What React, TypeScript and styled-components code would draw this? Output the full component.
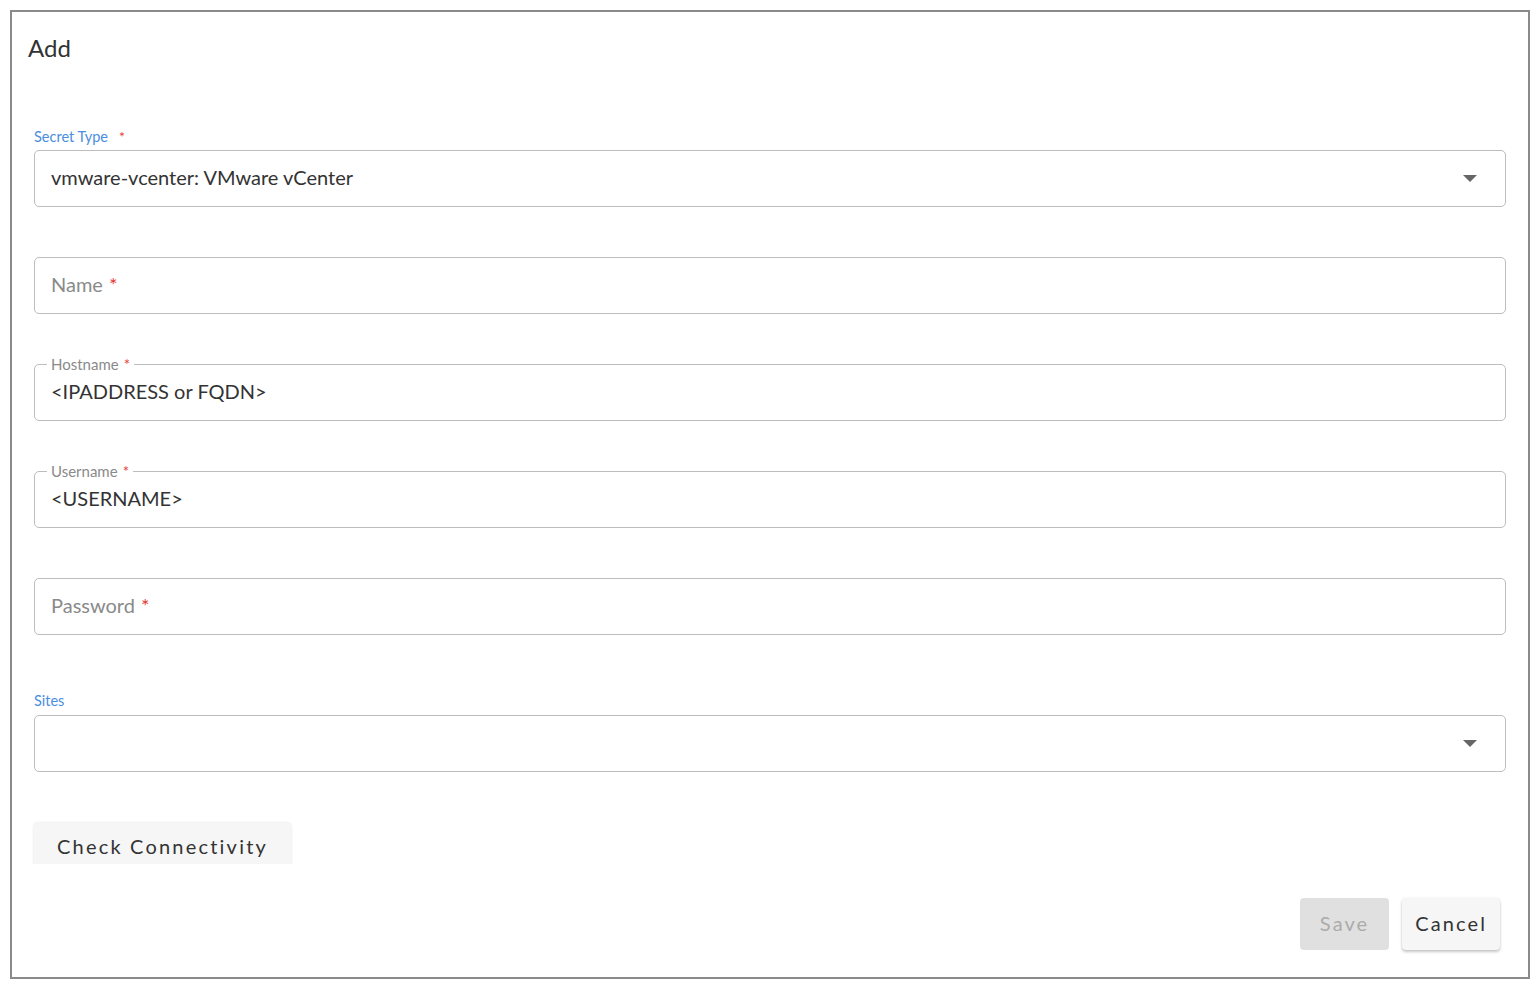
import React from "react";
import styled, { createGlobalStyle } from "styled-components";

const Global = createGlobalStyle`
  html, body { margin: 0; padding: 0; background: #ffffff; }
  body { font-family: "Lato", "Noto Sans", "Liberation Sans", sans-serif; color: #333; }
  * { box-sizing: border-box; }
`;

const Frame = styled.div`
  margin: 10px 0 0 10px;
  width: 1520px;
  height: 969px;
  border: 2px solid #8a8a8a;
  background: #fff;
  display: flex;
  flex-direction: column;
  padding: 0 22px;
`;

const Title = styled.div`
  margin-top: 21px;
  margin-left: -6px;
  font-size: 24px;
  line-height: 30px;
  color: #333;
`;

const TopLabel = styled.div<{ $mt: number }>`
  margin-top: ${(p) => p.$mt}px;
  font-size: 14.5px;
  line-height: 18px;
  color: #4a8ee0;
  display: flex;
  gap: 11px;
  margin-bottom: 4px;
`;

const Star = styled.span`
  color: #e53935;
  font-size: 14px;
`;

const Box = styled.div<{ $mt: number }>`
  position: relative;
  margin-top: ${(p) => p.$mt}px;
  height: 57px;
  border: 1.5px solid #bdbdbd;
  border-radius: 5px;
  display: flex;
  align-items: center;
  padding: 0 16px 4px 16px;
  font-size: 20px;
  color: #333;
`;

const Value = styled.span`
  flex: 1;
  color: #333;
`;

const Placeholder = styled.span`
  flex: 1;
  color: #8a8a8a;
`;

const PhStar = styled.span`
  color: #e53935;
  font-size: 20px;
  margin-left: 6px;
`;

const Notch = styled.span`
  position: absolute;
  top: -10px;
  left: 12px;
  padding: 0 4px;
  background: #fff;
  font-size: 15px;
  line-height: 18px;
  color: #8a8a8a;
`;

const NotchStar = styled.span`
  color: #e53935;
  margin-left: 5px;
`;

const Arrow = styled.svg`
  margin-right: 12px;
  margin-top: 4px;
`;

const ClipArea = styled.div`
  margin-top: 47px;
  margin-left: -5px;
  height: 45px;
  overflow: hidden;
  padding: 4px 5px 0 5px;
  align-self: flex-start;
`;

const Button = styled.button<{ $disabled?: boolean }>`
  font-family: inherit;
  border: none;
  border-radius: 4px;
  height: 52px;
  padding: 0 ${(p) => (p.$disabled ? "20px" : "13px")} 2px;
  font-size: 20px;
  letter-spacing: 2.1px;
  cursor: pointer;
  background: ${(p) => (p.$disabled ? "#e0e0e0" : "#f6f6f6")};
  color: ${(p) => (p.$disabled ? "#ababab" : "#333")};
  box-shadow: ${(p) =>
    p.$disabled ? "none" : "0 2px 3px rgba(0,0,0,0.22), 0 0 2px rgba(0,0,0,0.08)"};
`;

const CheckButton = styled(Button)`
  padding: 0 23px 4px;
  height: 50px;
  letter-spacing: 2.2px;
  box-shadow: 0 0 3px rgba(0,0,0,0.12);
`;

const Footer = styled.div`
  margin-top: auto;
  margin-bottom: 27px;
  margin-right: 6px;
  display: flex;
  justify-content: flex-end;
  gap: 13px;
`;

const DownArrow = () => (
  <Arrow width="14" height="8" viewBox="0 0 14 8">
    <path d="M0 0 L14 0 L7 7 Z" fill="#666" />
  </Arrow>
);

export default function App() {
  return (
    <>
      <Global />
      <Frame>
        <Title>Add</Title>

        <TopLabel $mt={65}>
          <span>Secret Type</span>
          <Star>*</Star>
        </TopLabel>
        <Box $mt={0}>
          <Value>vmware-vcenter: VMware vCenter</Value>
          <DownArrow />
        </Box>

        <Box $mt={50}>
          <Placeholder>
            Name<PhStar>*</PhStar>
          </Placeholder>
        </Box>

        <Box $mt={50}>
          <Notch>
            Hostname<NotchStar>*</NotchStar>
          </Notch>
          <Value>&lt;IPADDRESS or FQDN&gt;</Value>
        </Box>

        <Box $mt={50}>
          <Notch>
            Username<NotchStar>*</NotchStar>
          </Notch>
          <Value>&lt;USERNAME&gt;</Value>
        </Box>

        <Box $mt={50}>
          <Placeholder>
            Password<PhStar>*</PhStar>
          </Placeholder>
        </Box>

        <TopLabel $mt={57}>
          <span>Sites</span>
        </TopLabel>
        <Box $mt={1}>
          <Value />
          <DownArrow />
        </Box>

        <ClipArea>
          <CheckButton>Check Connectivity</CheckButton>
        </ClipArea>

        <Footer>
          <Button $disabled>Save</Button>
          <Button>Cancel</Button>
        </Footer>
      </Frame>
    </>
  );
}
